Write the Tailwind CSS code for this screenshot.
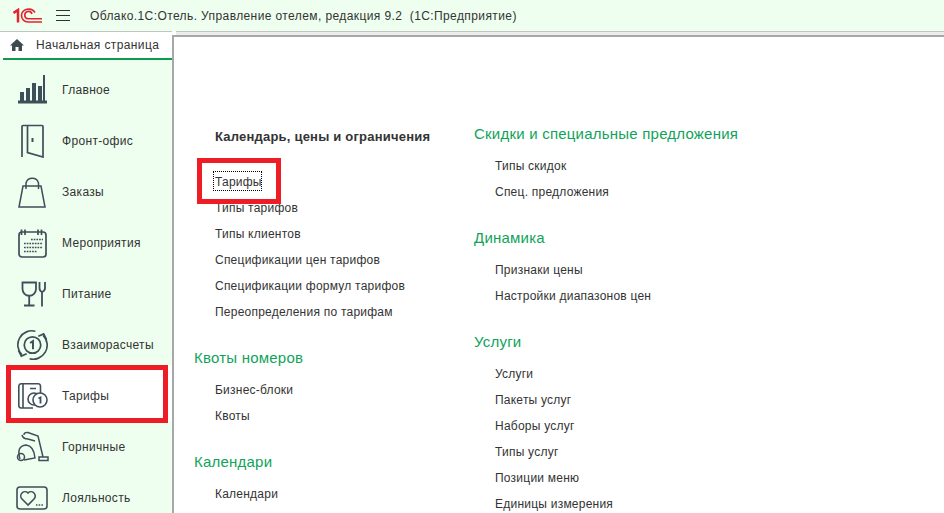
<!DOCTYPE html>
<html>
<head>
<meta charset="utf-8" />
<title>1C Hotel</title>
<script src="https://cdn.jsdelivr.net/npm/@tailwindcss/browser@4"></script>
</head>
<body class="w-[944px] h-[513px] overflow-hidden bg-white font-['Liberation_Sans',Arial,sans-serif] text-[#333]">
  <!-- header -->
  <div class="h-[31px] bg-[#eefeef] flex items-center">
    <svg class="ml-[13px] w-[30px] h-[16px] shrink-0" viewBox="0 0 30 16" fill="none" stroke="#e2242c">
      <path d="M0.500 5 L5 2 V14.500" stroke-width="2.500"/>
      <path d="M22 4.500 A7.200 6.500 0 0 0 8.500 7.500 A6.500 6.500 0 0 0 15 14 H29" stroke-width="1.600"/>
      <path d="M19 6 A3.700 3.700 0 1 0 15 10.800 H29" stroke-width="1.600"/>
    </svg>
    <div class="ml-[13px] w-[14px] flex flex-col gap-[4px]">
      <div class="h-[1px] bg-[#333]"></div>
      <div class="h-[1px] bg-[#333]"></div>
      <div class="h-[1px] bg-[#333]"></div>
    </div>
    <div class="ml-[20px] text-[12px] tracking-[0.4px] whitespace-pre">Облако.1С:Отель. Управление отелем, редакция 9.2  (1С:Предприятие)</div>
  </div>

  <div class="flex h-[482px]">
    <!-- sidebar -->
    <div class="w-[172px] shrink-0 flex flex-col">
      <div class="h-[29px] border-t border-[#c4c4c4]">
        <div class="h-[28px] ml-[3px] flex items-center border-b-[2px] border-[#0e9a50] bg-white">
          <svg class="ml-[7px] w-[14px] h-[12px]" viewBox="0 0 14 12" fill="#3d4a50"><path d="M7 0 L14 6.500 H12 V12 H8.500 V8 H5.500 V12 H2 V6.500 H0 Z"/></svg>
          <span class="ml-[12px] text-[12px] tracking-[0.4px]">Начальная страница</span>
        </div>
      </div>
      <div class="flex-1 bg-[#eefeef] overflow-hidden flex flex-col text-[12px] tracking-[0.32px]">
        <div class="h-[55px] shrink-0 flex items-center pt-[4px]">
          <svg class="ml-[17px] w-[31px] h-[30px] shrink-0" viewBox="0 0 31 30" fill="#3d4f58">
            <rect x="3" y="17" width="4" height="9"/><rect x="9" y="13" width="4" height="13"/><rect x="15" y="8" width="4" height="18"/><rect x="21" y="11" width="4" height="15"/><rect x="26" y="0" width="2" height="27"/><rect x="1" y="25.500" width="29" height="3"/>
          </svg>
          <span class="ml-[14px]">Главное</span>
        </div>
        <div class="h-[51px] shrink-0 flex items-center">
          <svg class="ml-[20px] w-[25px] h-[34px] shrink-0" viewBox="0 0 25 34" fill="none" stroke="#3d4f58" stroke-width="1.700">
            <path d="M2 33 V2.500 Q2 1.500 3 1.500 H22 Q23 1.500 23 2.500 V33 L7.500 28.500 V2"/><path d="M12.500 14 V18" stroke-width="2"/>
          </svg>
          <span class="ml-[17px]">Фронт-офис</span>
        </div>
        <div class="h-[51px] shrink-0 flex items-center">
          <svg class="ml-[17px] w-[30px] h-[34px] shrink-0" viewBox="0 0 30 34" fill="none" stroke="#3d4f58" stroke-width="1.500">
            <path d="M6 11 H24 L28 32 H2 Z"/><path d="M9 14 V8 A6.500 6.500 0 0 1 21.500 8 V14"/>
          </svg>
          <span class="ml-[15px]">Заказы</span>
        </div>
        <div class="h-[51px] shrink-0 flex items-center">
          <svg class="ml-[17px] w-[30px] h-[30px] shrink-0" viewBox="0 0 30 30" fill="none" stroke="#3d4f58" stroke-width="1.700">
            <rect x="2" y="4" width="27" height="25" rx="3"/>
            <path d="M4.500 1.500 V7 M8 1.500 V7 M21 1.500 V7 M24.500 1.500 V7" />
            <path d="M14 11.500 H26 M7 15.500 H26 M7 19.500 H26 M7 23.500 H20" stroke-width="1.600" stroke-dasharray="1.700 1"/>
          </svg>
          <span class="ml-[15px]">Мероприятия</span>
        </div>
        <div class="h-[51px] shrink-0 flex items-center">
          <svg class="ml-[21px] w-[25px] h-[26px] shrink-0" viewBox="0 0 25 26" fill="none" stroke="#3d4f58" stroke-width="1.800">
            <path d="M1.500 1.500 H15 V8 A6.700 6.700 0 0 1 1.500 8 Z"/><path d="M8.200 15 V24 M3 24.500 H13.500"/>
            <path d="M18.500 1 V7 Q18.500 10 21 11 V25.500 M24 1 V7 Q24 10 21 11"/>
          </svg>
          <span class="ml-[16px]">Питание</span>
        </div>
        <div class="h-[46px] shrink-0 flex items-center pt-[5px]">
          <svg class="ml-[17px] w-[31px] h-[32px] shrink-0" viewBox="0 0 32 32" fill="none" stroke="#3d4f58" stroke-width="1.700">
            <path d="M5 26 A14.500 14.500 0 0 1 19 1.800"/><path d="M27 6 A14.500 14.500 0 0 1 13 30.200"/>
            <path d="M1.500 21.500 L4.500 27.500 L10 25 M30.500 10.500 L27.500 4.500 L22 7" stroke-width="1.800"/>
            <circle cx="16" cy="16" r="8.500" stroke-width="1.800"/>
            <path d="M13.500 14 L16.500 12 V20.500" stroke-width="2"/>
          </svg>
          <span class="ml-[14px]">Взаиморасчеты</span>
        </div>
        <div class="h-[56px] shrink-0 flex items-center bg-white pt-[6px]">
          <svg class="ml-[18px] w-[30px] h-[26px] shrink-0" viewBox="0 0 30 26" fill="none" stroke="#3d4f58" stroke-width="1.600">
            <path d="M15 25 H3 A2.500 2.500 0 0 1 0.800 22.500 V3 A2.500 2.500 0 0 1 3 0.800 H20 A2.500 2.500 0 0 1 22.500 3 V10"/>
            <path d="M5 1 V25 M12 5.500 H18"/>
            <circle cx="16" cy="16" r="6"/>
            <circle cx="22" cy="17" r="7" fill="white"/>
            <path d="M20.500 15.500 L22.500 14.500 V20.500" stroke-width="1.800"/>
          </svg>
          <span class="ml-[14px]">Тарифы</span>
        </div>
        <div class="h-[50px] shrink-0 flex items-center pt-[2px]">
          <svg class="ml-[15px] w-[34px] h-[32px] shrink-0" viewBox="0 0 34 32" fill="none" stroke="#3d4f58" stroke-width="1.500">
            <path d="M9 4 Q9 1 13 1.500 L23 5 L28 26 M7 4 Q8 8 13 8 L20 10"/>
            <path d="M5 28 Q1 15 11 14 Q19 15 20 27 L9 29"/>
            <circle cx="6" cy="26" r="3.500"/>
            <rect x="24" y="26" width="9" height="3.500"/>
          </svg>
          <span class="ml-[13px]">Горничные</span>
        </div>
        <div class="h-[51px] shrink-0 flex items-center pt-[2px]">
          <svg class="ml-[16px] w-[32px] h-[24px] shrink-0" viewBox="0 0 32 24" fill="none" stroke="#3d4f58" stroke-width="1.600">
            <rect x="1" y="1" width="30" height="22" rx="3"/>
            <path d="M12 19 L6 13 A4.200 4.200 0 0 1 12 7 A4.200 4.200 0 0 1 18 13 Z"/>
            <path d="M20 19 H27" stroke-width="1.600" stroke-dasharray="1.500 1.200"/>
          </svg>
          <span class="ml-[14px]">Лояльность</span>
        </div>
      </div>
    </div>

    <!-- content -->
    <div class="flex-1 flex flex-col">
      <div class="h-[4px] border-t border-[#c4c4c4] ml-[4px] bg-[#ececec]"></div>
      <div class="flex-1 border-l-[2px] border-t-[2px] border-[#a8a8a8] flex overflow-hidden">
        <div class="ml-[20px] mt-[90px] w-[280px] shrink-0 text-[12px] tracking-[0.23px]">
          <div class="ml-[21px] h-[20px] leading-[20px] font-bold text-[13px] tracking-[0.21px]">Календарь, цены и ограничения</div>
          <div class="mt-[22px] ml-[21px] flex flex-col">
            <div class="h-[26px] leading-[26px]">Тарифы</div>
            <div class="h-[26px] leading-[26px]">Типы тарифов</div>
            <div class="h-[26px] leading-[26px]">Типы клиентов</div>
            <div class="h-[26px] leading-[26px]">Спецификации цен тарифов</div>
            <div class="h-[26px] leading-[26px]">Спецификации формул тарифов</div>
            <div class="h-[26px] leading-[26px]">Переопределения по тарифам</div>
          </div>
          <div class="mt-[24px] h-[20px] leading-[18px] text-[15px] tracking-[0.22px] text-[#10a35a]">Квоты номеров</div>
          <div class="mt-[8px] ml-[21px] flex flex-col">
            <div class="h-[26px] leading-[26px]">Бизнес-блоки</div>
            <div class="h-[26px] leading-[26px]">Квоты</div>
          </div>
          <div class="mt-[24px] h-[20px] leading-[18px] text-[15px] tracking-[0.22px] text-[#10a35a]">Календари</div>
          <div class="mt-[8px] ml-[21px] flex flex-col">
            <div class="h-[26px] leading-[26px]">Календари</div>
          </div>
        </div>
        <div class="mt-[88px] flex-1 text-[12px] tracking-[0.23px]">
          <div class="h-[20px] leading-[18px] text-[15px] tracking-[0.22px] text-[#10a35a]">Скидки и специальные предложения</div>
          <div class="mt-[8px] ml-[21px] flex flex-col">
            <div class="h-[26px] leading-[26px]">Типы скидок</div>
            <div class="h-[26px] leading-[26px]">Спец. предложения</div>
          </div>
          <div class="mt-[24px] h-[20px] leading-[18px] text-[15px] tracking-[0.22px] text-[#10a35a]">Динамика</div>
          <div class="mt-[8px] ml-[21px] flex flex-col">
            <div class="h-[26px] leading-[26px]">Признаки цены</div>
            <div class="h-[26px] leading-[26px]">Настройки диапазонов цен</div>
          </div>
          <div class="mt-[24px] h-[20px] leading-[18px] text-[15px] tracking-[0.22px] text-[#10a35a]">Услуги</div>
          <div class="mt-[8px] ml-[21px] flex flex-col">
            <div class="h-[26px] leading-[26px]">Услуги</div>
            <div class="h-[26px] leading-[26px]">Пакеты услуг</div>
            <div class="h-[26px] leading-[26px]">Наборы услуг</div>
            <div class="h-[26px] leading-[26px]">Типы услуг</div>
            <div class="h-[26px] leading-[26px]">Позиции меню</div>
            <div class="h-[26px] leading-[26px]">Единицы измерения</div>
          </div>
        </div>
      </div>
    </div>
  </div>

  <!-- red annotation frames -->
  <div class="absolute left-[6px] top-[365px] w-[162px] h-[58px] border-[5px] border-[#ee1c25]"></div>
  <div class="absolute left-[197px] top-[158px] w-[84px] h-[46px] border-[5px] border-[#ee1c25]"></div>
  <div class="absolute left-[213px] top-[171px] w-[49px] h-[20px] border border-dotted border-black"></div>
</body>
</html>
